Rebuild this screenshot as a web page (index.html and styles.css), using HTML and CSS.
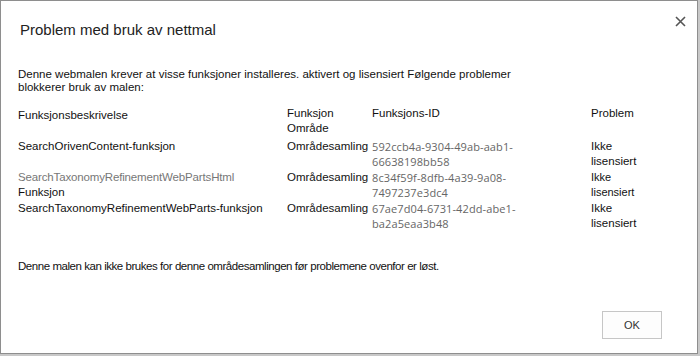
FILE: index.html
```html
<!DOCTYPE html>
<html lang="no">
<head>
<meta charset="utf-8">
<link rel="stylesheet" href="styles.css">
</head>
<body>
<div class="dialog">
  <div class="header">
    <h1 class="title">Problem med bruk av nettmal</h1>
    <button class="close" aria-label="Lukk">
      <svg width="11" height="11" viewBox="0 0 11 11"><path d="M1 1L10 10M10 1L1 10" stroke="#555" stroke-width="1.6" fill="none"/></svg>
    </button>
  </div>
  <div class="content">
    <p class="intro">Denne webmalen krever at visse funksjoner installeres. aktivert og lisensiert Følgende problemer blokkerer bruk av malen:</p>
    <div class="grid">
      <div class="cell hd first">Funksjonsbeskrivelse</div>
      <div class="cell hd">Funksjon<br>Område</div>
      <div class="cell hd">Funksjons-ID</div>
      <div class="cell hd">Problem</div>

      <div class="cell">SearchOrivenContent-funksjon</div>
      <div class="cell">Områdesamling</div>
      <div class="cell id">592ccb4a-9304-49ab-aab1-<br>66638198bb58</div>
      <div class="cell">Ikke<br>lisensiert</div>

      <div class="cell"><span class="gray">SearchTaxonomyRefinementWebPartsHtml</span><br>Funksjon</div>
      <div class="cell">Områdesamling</div>
      <div class="cell id">8c34f59f-8dfb-4a39-9a08-<br>7497237e3dc4</div>
      <div class="cell small">Ikke<br>lisensiert</div>

      <div class="cell">SearchTaxonomyRefinementWebParts-funksjon</div>
      <div class="cell">Områdesamling</div>
      <div class="cell id">67ae7d04-6731-42dd-abe1-<br>ba2a5eaa3b48</div>
      <div class="cell">Ikke<br>lisensiert</div>
    </div>
    <p class="outro">Denne malen kan ikke brukes for denne områdesamlingen før problemene ovenfor er løst.</p>
  </div>
  <div class="footer">
    <button class="ok">OK</button>
  </div>
</div>
</body>
</html>
```

FILE: styles.css
```css
html, body {
  margin: 0;
  padding: 0;
}
body {
  width: 700px;
  height: 356px;
  background: #c8c8c8;
  font-family: "Liberation Sans", Arial, sans-serif;
  overflow: hidden;
}
.dialog {
  box-sizing: border-box;
  width: 698px;
  height: 354px;
  background: #fff;
  border: 1px solid #8e8e8e;
  display: flex;
  flex-direction: column;
}
.header {
  display: flex;
  justify-content: space-between;
  align-items: flex-start;
  padding: 19px 11px 0 19px;
}
.title {
  margin: 0;
  font-family: "Liberation Sans", Arial, sans-serif;
  font-weight: 400;
  font-size: 15px;
  line-height: 20px;
  color: #222;
}
.close {
  border: 0;
  background: none;
  padding: 0;
  margin-top: -4px;
  width: 11px;
  height: 11px;
  display: flex;
}
.content {
  padding: 0 0 0 17px;
  flex: 1;
  color: #111;
  font-size: 11.5px;
}
.intro {
  margin: 28px 0 0;
  line-height: 13px;
  width: 520px;
}
.grid {
  margin-top: 12px;
  display: grid;
  grid-template-columns: 269px 85px 219px auto;
  row-gap: 1px;
}
.cell {
  line-height: 15px;
  min-height: 30px;
}
.hd.first {
  padding-top: 2px;
}
.id {
  font-family: "Open Sans", "Liberation Sans", sans-serif;
  font-size: 11px;
  color: #666;
  letter-spacing: 0.1px;
}
.gray {
  color: #777;
  letter-spacing: -0.15px;
}
.small {
  font-size: 11px;
}
.outro {
  margin: 28px 0 0;
  line-height: 14px;
  letter-spacing: -0.45px;
}
.footer {
  display: flex;
  justify-content: flex-end;
  padding: 0 35px 14px 0;
}
.ok {
  box-sizing: border-box;
  width: 60px;
  height: 28px;
  border: 1px solid #c6c6c6;
  background: #fdfdfd;
  font-family: "Liberation Sans", Arial, sans-serif;
  font-size: 11px;
  color: #333;
  padding: 0;
}
```
